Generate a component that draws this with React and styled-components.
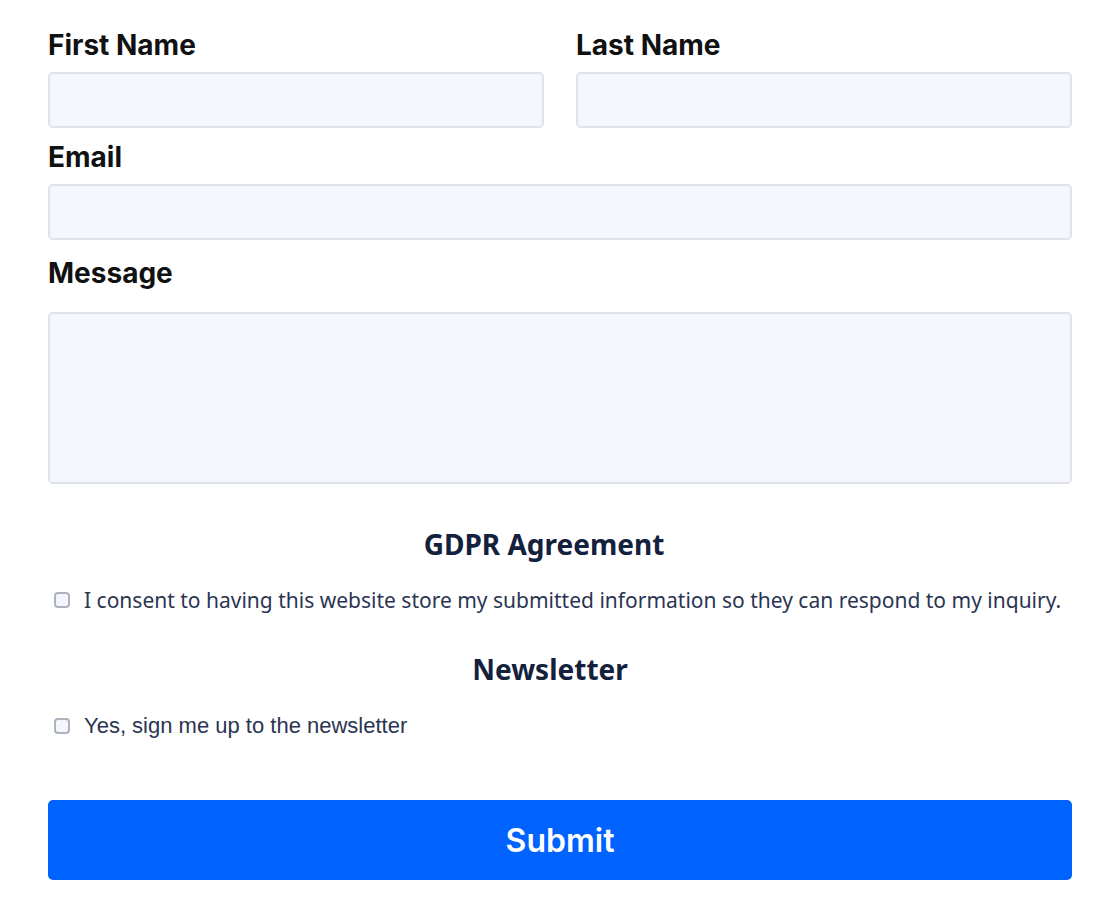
import React from 'react';
import styled, {createGlobalStyle} from 'styled-components';

const GlobalStyle = createGlobalStyle`
  body {
    margin: 0;
    background: #ffffff;
    font-family: "Liberation Sans", Arial, sans-serif;
  }
`;

const Form = styled.form`
  width: 1024px;
  padding: 28px 48px 32px;
  display: flex;
  flex-direction: column;
`;

const Row = styled.div`
  display: grid;
  grid-template-columns: 1fr 1fr;
  column-gap: 32px;
`;

const Field = styled.div`
  display: flex;
  flex-direction: column;
  margin-top: ${p => p.$top || 0}px;
`;

const Label = styled.label`
  font-family: Inter, "Liberation Sans", sans-serif;
  font-weight: 700;
  font-size: 28px;
  line-height: 34px;
  color: #111111;
  margin-bottom: ${p => p.$gap || 10}px;
`;

const Input = styled.input`
  box-sizing: border-box;
  height: 56px;
  width: 100%;
  background: #f3f6fd;
  border: 2px solid #dfe2ea;
  border-radius: 5px;
  outline: none;
`;

const TextArea = styled.textarea`
  box-sizing: border-box;
  height: 172px;
  width: 100%;
  background: #f3f6fd;
  border: 2px solid #dfe2ea;
  border-radius: 5px;
  resize: none;
  outline: none;
`;

const Section = styled.div`
  margin-top: ${p => p.$top}px;
  display: flex;
  flex-direction: column;
`;

const Heading = styled.h3`
  margin: 0;
  text-align: center;
  font-family: "Noto Sans", "Open Sans", sans-serif;
  font-weight: 700;
  font-size: 28px;
  line-height: 32px;
  color: #14213d;
  padding-right: ${p => p.$shift || 0}px;
`;

const CheckRow = styled.label`
  display: flex;
  align-items: center;
  gap: 14px;
  margin-top: ${p => p.$top}px;
  padding-left: 6px;
  font-family: ${p => p.$ubuntu ? '"Noto Sans", "Open Sans", sans-serif' : '"Liberation Sans", Arial, sans-serif'};
  font-size: ${p => p.$size}px;
  line-height: 28px;
  color: #2b3553;
`;

const Box = styled.span`
  width: 16px;
  height: 16px;
  box-sizing: border-box;
  border: 2.5px solid #aeb2bd;
  border-radius: 4px;
  background: #f3f6fd;
  flex-shrink: 0;
`;

const Submit = styled.button`
  margin-top: 60px;
  height: 80px;
  border: none;
  border-radius: 5px;
  background: #0062ff;
  color: #ffffff;
  font-family: Inter, "Liberation Sans", sans-serif;
  font-weight: 600;
  font-size: 32px;
`;

export default function App() {
    return (
        <>
            <GlobalStyle/>
            <Form onSubmit={e => e.preventDefault()}>
                <Row>
                    <Field>
                        <Label>First Name</Label>
                        <Input type="text"/>
                    </Field>
                    <Field>
                        <Label>Last Name</Label>
                        <Input type="text"/>
                    </Field>
                </Row>
                <Field $top={12}>
                    <Label>Email</Label>
                    <Input type="email"/>
                </Field>
                <Field $top={16}>
                    <Label $gap={22}>Message</Label>
                    <TextArea/>
                </Field>

                <Section $top={44}>
                    <Heading $shift={32}>GDPR Agreement</Heading>
                    <CheckRow $top={26} $size={21} $ubuntu>
                        <Box/>
                        I consent to having this website store my submitted information so they can respond to my inquiry.
                    </CheckRow>
                </Section>

                <Section $top={39}>
                    <Heading $shift={20}>Newsletter</Heading>
                    <CheckRow $top={27} $size={22}>
                        <Box/>
                        Yes, sign me up to the newsletter
                    </CheckRow>
                </Section>

                <Submit type="submit">Submit</Submit>
            </Form>
        </>
    );
}
